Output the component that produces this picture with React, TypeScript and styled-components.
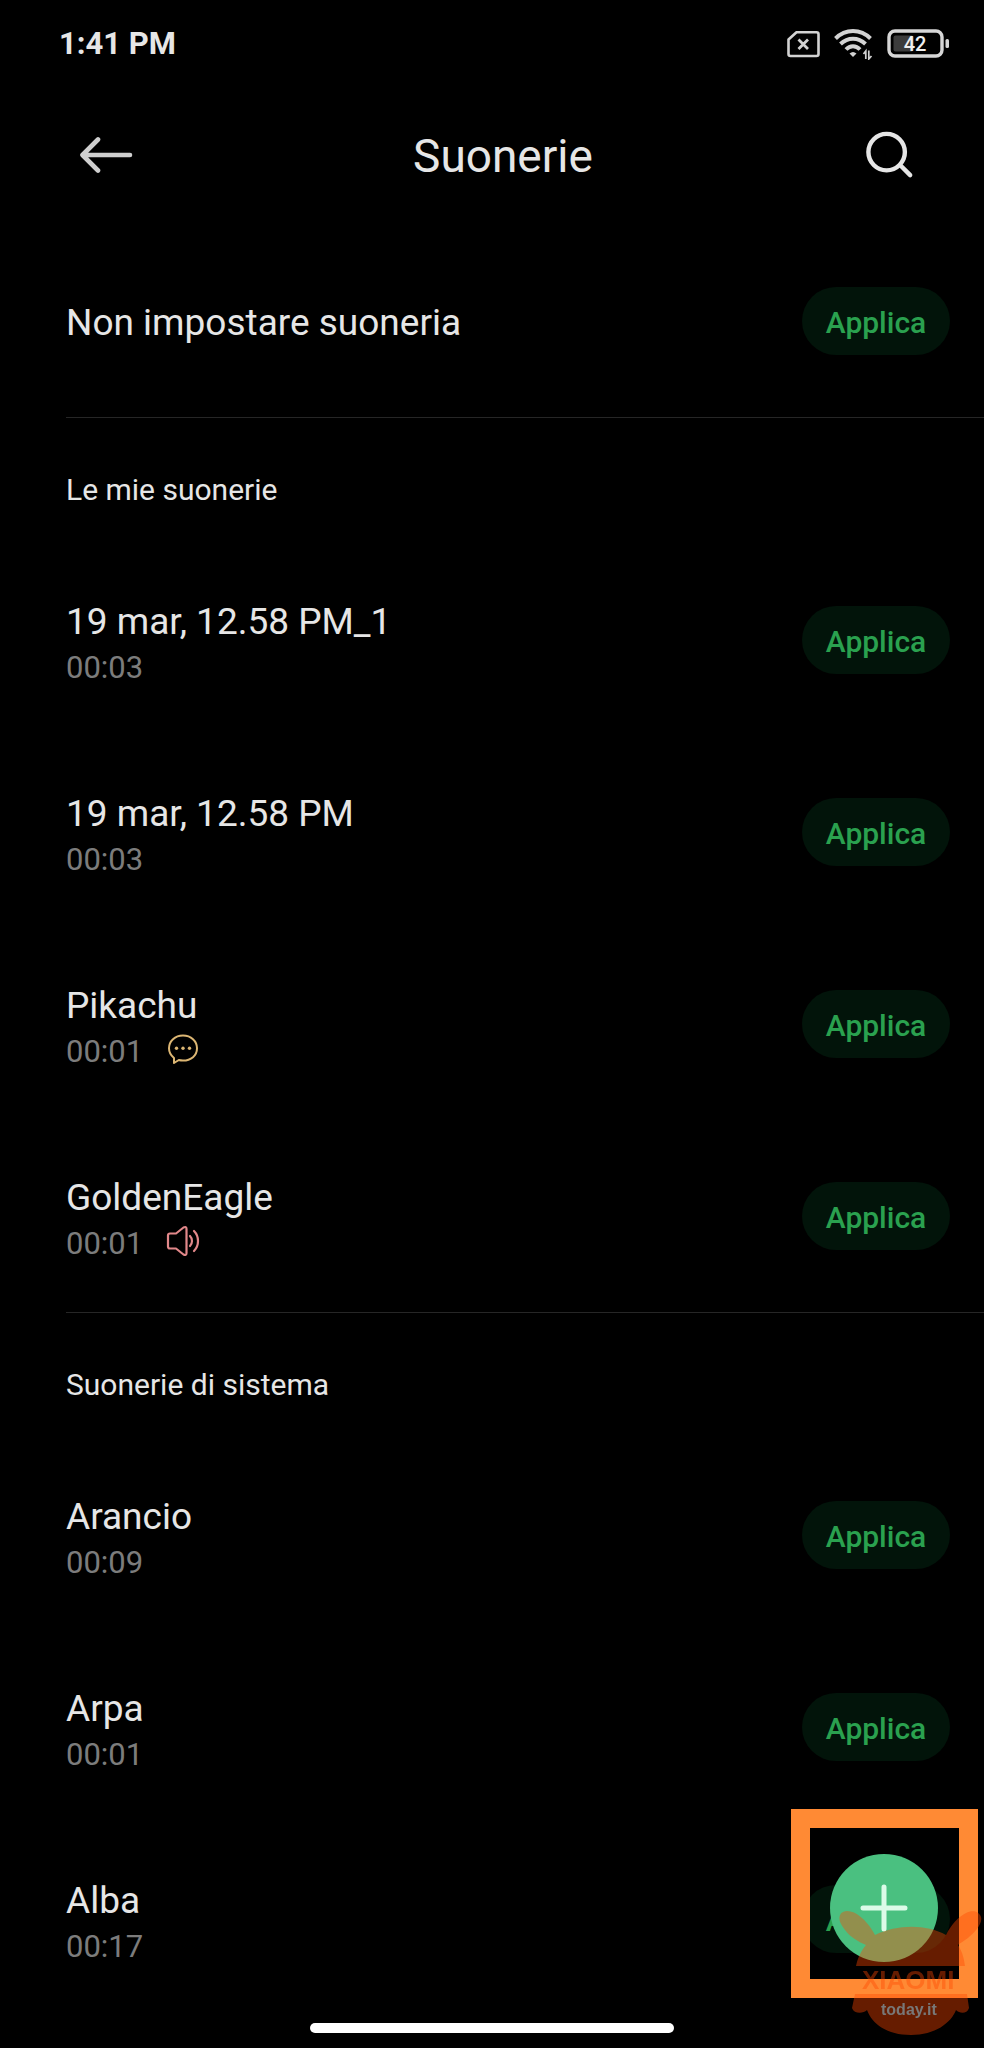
import React from "react";
import styled, { createGlobalStyle } from "styled-components";

const GlobalStyle = createGlobalStyle`
  * { box-sizing: border-box; }
  html, body { margin: 0; background: #000; }
  body { font-family: Roboto, "Liberation Sans", sans-serif; color: #e6e6e6; }
  h1, h2, ul { margin: 0; padding: 0; font-weight: 400; list-style: none; }
  button { font: inherit; border: 0; padding: 0; cursor: pointer; }
  svg { display: block; }
`;

const Screen = styled.div`
  min-height: 100vh;
  display: flex;
  flex-direction: column;
  background: #000;
`;

const StatusBar = styled.div`
  display: flex;
  align-items: center;
  justify-content: space-between;
  height: 87px;
  padding: 0 34px 0 59px;
`;

const Clock = styled.span`
  font-size: 31px;
  line-height: 40px;
  font-weight: 700;
`;

const StatusIcons = styled.div`
  display: flex;
  align-items: center;
  gap: 14px;
`;

const TopBar = styled.header`
  display: flex;
  align-items: center;
  justify-content: space-between;
  height: 138px;
  padding: 0 70px 3px 80px;
`;

const Title = styled.h1`
  padding-top: 3px;
  font-size: 46px;
  line-height: 54px;
`;

const IconButton = styled.button<{ $width: number }>`
  display: flex;
  align-items: center;
  width: ${(p) => p.$width}px;
  height: 60px;
  background: none;
  color: #e6e6e6;
`;

const List = styled.main`
  flex: 1;
  padding-left: 66px;
`;

const Section = styled.section`
  border-top: 1px solid #262626;
`;

const SectionTitle = styled.h2`
  display: flex;
  align-items: center;
  height: 126px;
  padding-top: 18px;
  font-size: 30px;
  line-height: 36px;
`;

const Row = styled.li`
  display: flex;
  align-items: center;
  justify-content: space-between;
  height: 192px;
  padding-right: 34px;
`;

const RowText = styled.div<{ $detailed: boolean }>`
  padding-top: ${(p) => (p.$detailed ? 10 : 4)}px;
`;

const Name = styled.div`
  font-size: 37px;
  line-height: 46px;
`;

const Detail = styled.div`
  display: flex;
  align-items: center;
  gap: 23px;
  height: 46px;
  font-size: 31px;
  line-height: 46px;
  color: #7c7c7c;

  svg { margin-bottom: 6px; }
`;

const ApplyButton = styled.button`
  width: 148px;
  height: 68px;
  padding-top: 4px;
  border-radius: 34px;
  background: #02140a;
  color: #2aa14f;
  font-size: 30px;
  line-height: 36px;
  font-weight: 500;
`;

const HomeArea = styled.footer`
  display: flex;
  justify-content: center;
  padding: 8px 0 15px;
`;

const HomeBar = styled.div`
  width: 37%;
  height: 10px;
  border-radius: 5px;
  background: #fff;
`;

const Highlight = styled.div`
  position: fixed;
  right: 6px;
  bottom: 50px;
  width: 187px;
  height: 189px;
  border: 19px solid #ff8a34;
  pointer-events: none;
`;

const AddButton = styled.button`
  position: fixed;
  right: 46px;
  bottom: 86px;
  display: flex;
  align-items: center;
  justify-content: center;
  width: 108px;
  height: 108px;
  border-radius: 50%;
  background: #4ac080;
`;

const Watermark = styled.svg`
  position: fixed;
  right: 0;
  bottom: 11px;
  pointer-events: none;
  font-family: "Liberation Sans", Arial, sans-serif;
  font-weight: 700;
`;

type Kind = "message" | "alarm";
type Tone = { name: string; time?: string; kind?: Kind };

const myTones: Tone[] = [
  { name: "19 mar, 12.58 PM_1", time: "00:03" },
  { name: "19 mar, 12.58 PM", time: "00:03" },
  { name: "Pikachu", time: "00:01", kind: "message" },
  { name: "GoldenEagle", time: "00:01", kind: "alarm" },
];

const systemTones: Tone[] = [
  { name: "Arancio", time: "00:09" },
  { name: "Arpa", time: "00:01" },
  { name: "Alba", time: "00:17" },
];

const MessageIcon = () => (
  <svg width="34" height="32" viewBox="0 0 34 32" fill="none" stroke="#dcb673" strokeWidth="2" strokeLinejoin="round">
    <path d="M8 25C5 22.6 3 19 3 15.3C3 8 9 2.6 17 2.6S31 8 31 15.300S25 27.500 17 27.500C15.500 27.500 14 27.300 12.800 27L8 30Z" />
    <g fill="#dcb673" stroke="none">
      <circle cx="10.500" cy="15.300" r="1.700" />
      <circle cx="17" cy="15.300" r="1.700" />
      <circle cx="23.500" cy="15.300" r="1.700" />
    </g>
  </svg>
);

const SpeakerIcon = () => (
  <svg width="34" height="32" viewBox="0 0 34 32" fill="none" stroke="#e2888a" strokeWidth="2.200" strokeLinecap="round" strokeLinejoin="round">
    <path d="M4 8.500H10L17.500 2.500Q20.500 1 20.500 4V28Q20.500 31 17.500 29.500L10 23.500H4Q2 23.500 2 21.500V10.500Q2 8.500 4 8.500Z" />
    <path d="M24 11Q26 13 26 16T24 21" />
    <path d="M28 6Q32 10 32 16T28 26" />
  </svg>
);

const SimIcon = () => (
  <svg width="33" height="28" viewBox="0 0 33 28" fill="none" stroke="#d2d2d2" strokeWidth="2.600" strokeLinejoin="round">
    <path d="M9.500 2.200H29.500Q31.500 2.200 31.500 4.200V24Q31.500 26 29.500 26H3.500Q1.500 26 1.500 24V9.500Z" />
    <path d="M11.500 9.500L21 19M21 9.500L11.500 19" strokeWidth="2.800" />
  </svg>
);

const WifiIcon = () => (
  <svg width="39" height="32" viewBox="0 0 39 32" fill="none" stroke="#d2d2d2" strokeWidth="4">
    <path d="M1.500 10.500Q9 3 19 3T36.500 10.500" />
    <path d="M6.500 16Q12 10.700 19 10.700T31.500 16" />
    <path d="M12 21.500Q15 18.300 19 18.300T26 21.500" />
    <path d="M15.500 25.500Q19 22.500 22.500 25.500L19 29Z" fill="#d2d2d2" stroke="none" />
    <path d="M31.800 31V23L29.500 26M34.800 22.500V31L37.500 28" strokeWidth="1.700" />
  </svg>
);

const BatteryIcon = () => (
  <svg width="63" height="30" viewBox="0 0 63 30">
    <rect x="2" y="2" width="53" height="25" rx="6" fill="none" stroke="#d6d6d6" strokeWidth="3.400" />
    <rect x="6.500" y="6.500" width="20" height="16" rx="2" fill="#3c3c3c" />
    <rect x="58.500" y="10" width="3.500" height="9" rx="1.500" fill="#d6d6d6" />
    <text x="28" y="21.500" textAnchor="middle" fontSize="20" fontWeight="500" fill="#f0f0f0">42</text>
  </svg>
);

const BackIcon = () => (
  <svg width="54" height="40" viewBox="0 0 54 40" fill="none" stroke="#cfcfcf" strokeWidth="4.600" strokeLinecap="round" strokeLinejoin="round">
    <path d="M18 4.500L2.500 20L18 35.500M3 20H50" />
  </svg>
);

const SearchIcon = () => (
  <svg width="50" height="50" viewBox="0 0 50 50" fill="none" stroke="#e6e6e6" strokeWidth="4.600" strokeLinecap="round">
    <circle cx="21.500" cy="22" r="19" />
    <path d="M36 36L46 46" />
  </svg>
);

const ToneRow = ({ name, time, kind }: Tone) => (
  <Row>
    <RowText $detailed={Boolean(time)}>
      <Name>{name}</Name>
      {time && (
        <Detail>
          <span>{time}</span>
          {kind === "message" && <MessageIcon />}
          {kind === "alarm" && <SpeakerIcon />}
        </Detail>
      )}
    </RowText>
    <ApplyButton type="button" aria-label={`Applica ${name}`}>Applica</ApplyButton>
  </Row>
);

const ToneSection = ({ title, tones }: { title: string; tones: Tone[] }) => (
  <Section>
    <SectionTitle>{title}</SectionTitle>
    <ul>
      {tones.map((tone) => (
        <ToneRow key={tone.name} {...tone} />
      ))}
    </ul>
  </Section>
);

export default function App() {
  return (
    <Screen>
      <GlobalStyle />
      <StatusBar>
        <Clock>1:41 PM</Clock>
        <StatusIcons>
          <SimIcon />
          <WifiIcon />
          <BatteryIcon />
        </StatusIcons>
      </StatusBar>
      <TopBar>
        <IconButton $width={60} type="button" aria-label="Indietro"><BackIcon /></IconButton>
        <Title>Suonerie</Title>
        <IconButton $width={48} type="button" aria-label="Cerca"><SearchIcon /></IconButton>
      </TopBar>
      <List>
        <ul>
          <ToneRow name="Non impostare suoneria" />
        </ul>
        <ToneSection title="Le mie suonerie" tones={myTones} />
        <ToneSection title="Suonerie di sistema" tones={systemTones} />
      </List>
      <HomeArea>
        <HomeBar />
      </HomeArea>
      <Highlight />
      <AddButton type="button" aria-label="Aggiungi">
        <svg width="48" height="48" viewBox="0 0 48 48" stroke="#dcfbe8" strokeWidth="5" strokeLinecap="round">
          <path d="M24 3V45M3 24H45" />
        </svg>
      </AddButton>
      <Watermark width="147" height="130" viewBox="0 0 147 130">
        <g fill="#ff4800" opacity="0.4">
          <path d="M19 59C21 50 24 44 29 38C22 35 13 30 8 23C4 18 1 13 3 8C6 2 14 4 18 6C27 11 34 20 38 28C60 17 90 17 109 28C114 18 121 10 129 6C135 3 142 4 144 10C146 17 137 26 131 31C127 34 123 36 121 38C126 46 127 52 128 59Z" />
          <path d="M18 87H130L132 101C130 107 123 107 119 103C114 116 98 128 74 128S35 117 30 103C26 107 17 107 15 101Z" />
          <text x="25" y="82" fontSize="26">XIAOMI</text>
        </g>
        <text x="44" y="108" fontSize="16" fill="#787878">today.it</text>
      </Watermark>
    </Screen>
  );
}
